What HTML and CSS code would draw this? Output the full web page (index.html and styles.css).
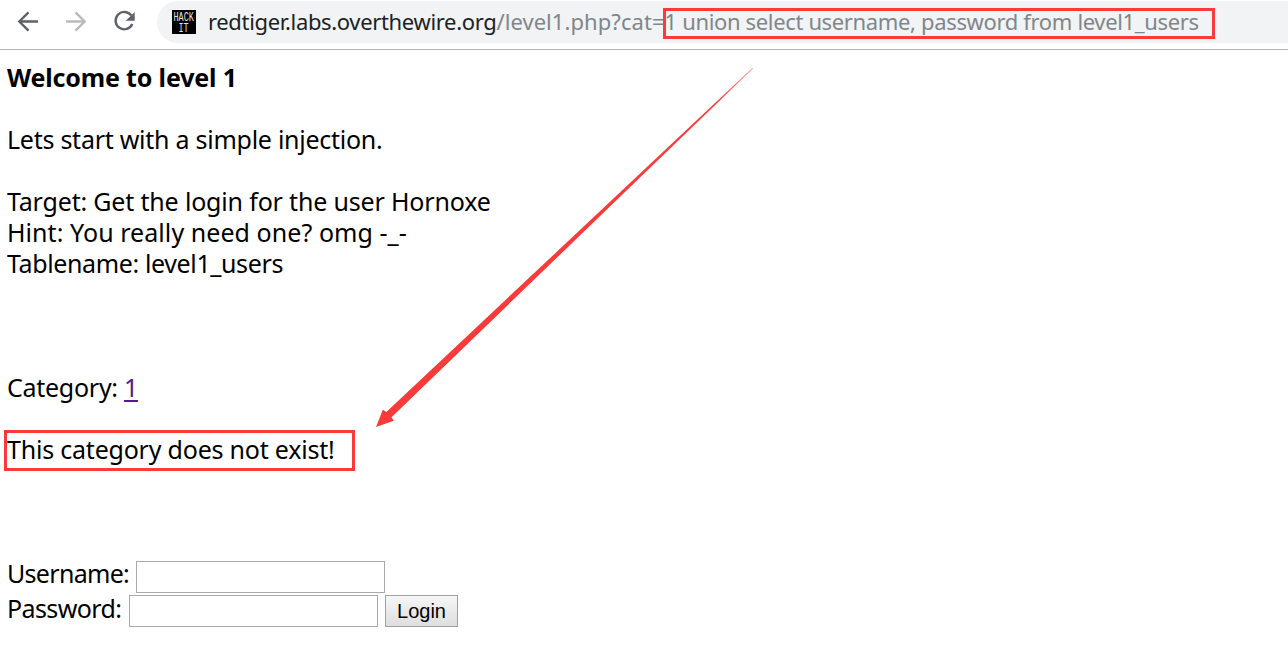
FILE: index.html
```
<!DOCTYPE html>
<html lang="en">
<head>
<meta charset="utf-8">
<title>Level 1</title>
<link rel="stylesheet" href="styles.css">
</head>
<body>
<header class="toolbar">
  <svg class="nav" width="157" height="44" viewBox="0 0 157 44" fill="none" stroke-width="2.4">
    <path stroke="#5f6368" d="M38 21.500H19.500M28.500 12.300L19.300 21.500l9.200 9.200"/>
    <path stroke="#bababa" d="M66 21.500h18.500M75.500 12.300l9.200 9.200-9.200 9.200"/>
    <path stroke="#5f6368" d="M131.400 15.600A8.700 8.700 0 1 0 132.300 24"/>
    <path fill="#5f6368" d="M134.700 12v8.800h-9z"/>
  </svg>
  <div class="address">
    <svg class="favicon" width="24" height="24" viewBox="0 0 24 24">
      <rect width="24" height="24" fill="#000"/>
      <text transform="translate(1.500 10.500) scale(.89 1.250)">HACK</text>
      <text transform="translate(6.500 21.800) scale(.89 1.250)">IT</text>
    </svg>
    <span class="url"><span class="host">redtiger.labs.overthewire.org</span><span class="path">/level1.php?cat=</span><span class="query">1 union select username, password from level1_users</span></span>
  </div>
</header>
<main class="page">
  <p class="line title">Welcome to level 1</p>
  <p class="line intro">Lets start with a simple injection.</p>
  <div class="task">
    <p class="line target">Target: Get the login for the user Hornoxe</p>
    <p class="line hint">Hint: You really need one? omg -_-</p>
    <p class="line table">Tablename: level1_users</p>
  </div>
  <p class="line category">Category: <a href="#">1</a></p>
  <p class="line result">This category does not exist!</p>
  <form class="login">
    <div class="row"><label class="user" for="user">Username:</label><input id="user" type="text"></div>
    <div class="row"><label class="pass" for="pass">Password:</label><input id="pass" type="password"><button type="button">Login</button></div>
  </form>
</main>
<svg class="marks" width="1288" height="668" viewBox="0 0 1288 668">
  <defs>
    <linearGradient id="fade" gradientUnits="userSpaceOnUse" x1="753" y1="68" x2="715" y2="104">
      <stop offset="0" stop-color="#fc3a3a" stop-opacity=".5"/>
      <stop offset="1" stop-color="#fc3a3a"/>
    </linearGradient>
  </defs>
  <rect x="664.500" y="9.500" width="549" height="28"/>
  <rect x="5.500" y="431.500" width="348" height="38"/>
  <path class="arrow" fill="url(#fade)" d="M752.500 67.800L753 68.400L391.500 417.300l2.300 3.400L376 427l6.800-17.200 3.500 2.200z"/>
</svg>
</body>
</html>
```
FILE: styles.css
```
body {
  margin: 0;
  width: 1288px;
  height: 668px;
  overflow: hidden;
  position: relative;
  background: #fff;
  color: #000;
  font: 25px/31px "Noto Sans", sans-serif;
}
.toolbar {
  display: flex;
  box-sizing: border-box;
  height: 50px;
  padding-top: 1px;
  border-bottom: 1px solid #b3b3b3;
}
.nav { margin-top: -1px; flex: none; }
.address {
  display: flex;
  flex: 1;
  align-items: center;
  height: 42px;
  padding-left: 15px;
  border-radius: 21px 0 0 21px;
  background: #f1f3f4;
  white-space: nowrap;
}
.favicon { flex: none; margin-right: 12px; }
.favicon text { font: 9.500px "Liberation Mono", monospace; fill: #e2e2e2; }
.url { margin-top: -2px; font-size: 22px; color: #80868b; }
.host { color: #202124; letter-spacing: -.34px; }
.path { letter-spacing: .06px; }
.query { letter-spacing: -.35px; }
.page { padding: 12px 7px 0; }
.line { margin: 0 0 31px; height: 31px; white-space: nowrap; }
.title { font-weight: 700; letter-spacing: -.16px; }
.intro { letter-spacing: -.26px; }
.task { margin-bottom: 93px; }
.task .line { margin: 0; }
.target { letter-spacing: -.17px; }
.hint { letter-spacing: .06px; }
.table { letter-spacing: -.37px; }
.category { letter-spacing: -.27px; }
.category a { color: #551a8b; text-decoration-thickness: 2px; text-underline-offset: 3px; }
.line.result { margin-bottom: 96px; letter-spacing: -.21px; }
.row { display: flex; align-items: flex-start; height: 34px; }
.row label { height: 31px; }
.user { width: 129px; margin-top: -3px; letter-spacing: -.7px; }
.pass { width: 122px; margin-top: -2px; letter-spacing: -.6px; }
.row input {
  box-sizing: border-box;
  width: 249px;
  height: 32px;
  margin: 0;
  border: 1px solid #a9a9a9;
  background: #fff;
}
.row button {
  box-sizing: border-box;
  width: 73px;
  height: 32px;
  margin: 0 0 0 7px;
  padding: 0;
  border: 1px solid #a0a0a0;
  border-radius: 0;
  background: linear-gradient(#f6f6f6, #dedede);
  color: #000;
  font: 20px "Liberation Sans", sans-serif;
}
.marks { position: absolute; left: 0; top: 0; pointer-events: none; }
.marks rect { fill: none; stroke: #fc3a3a; stroke-width: 3; }
```
